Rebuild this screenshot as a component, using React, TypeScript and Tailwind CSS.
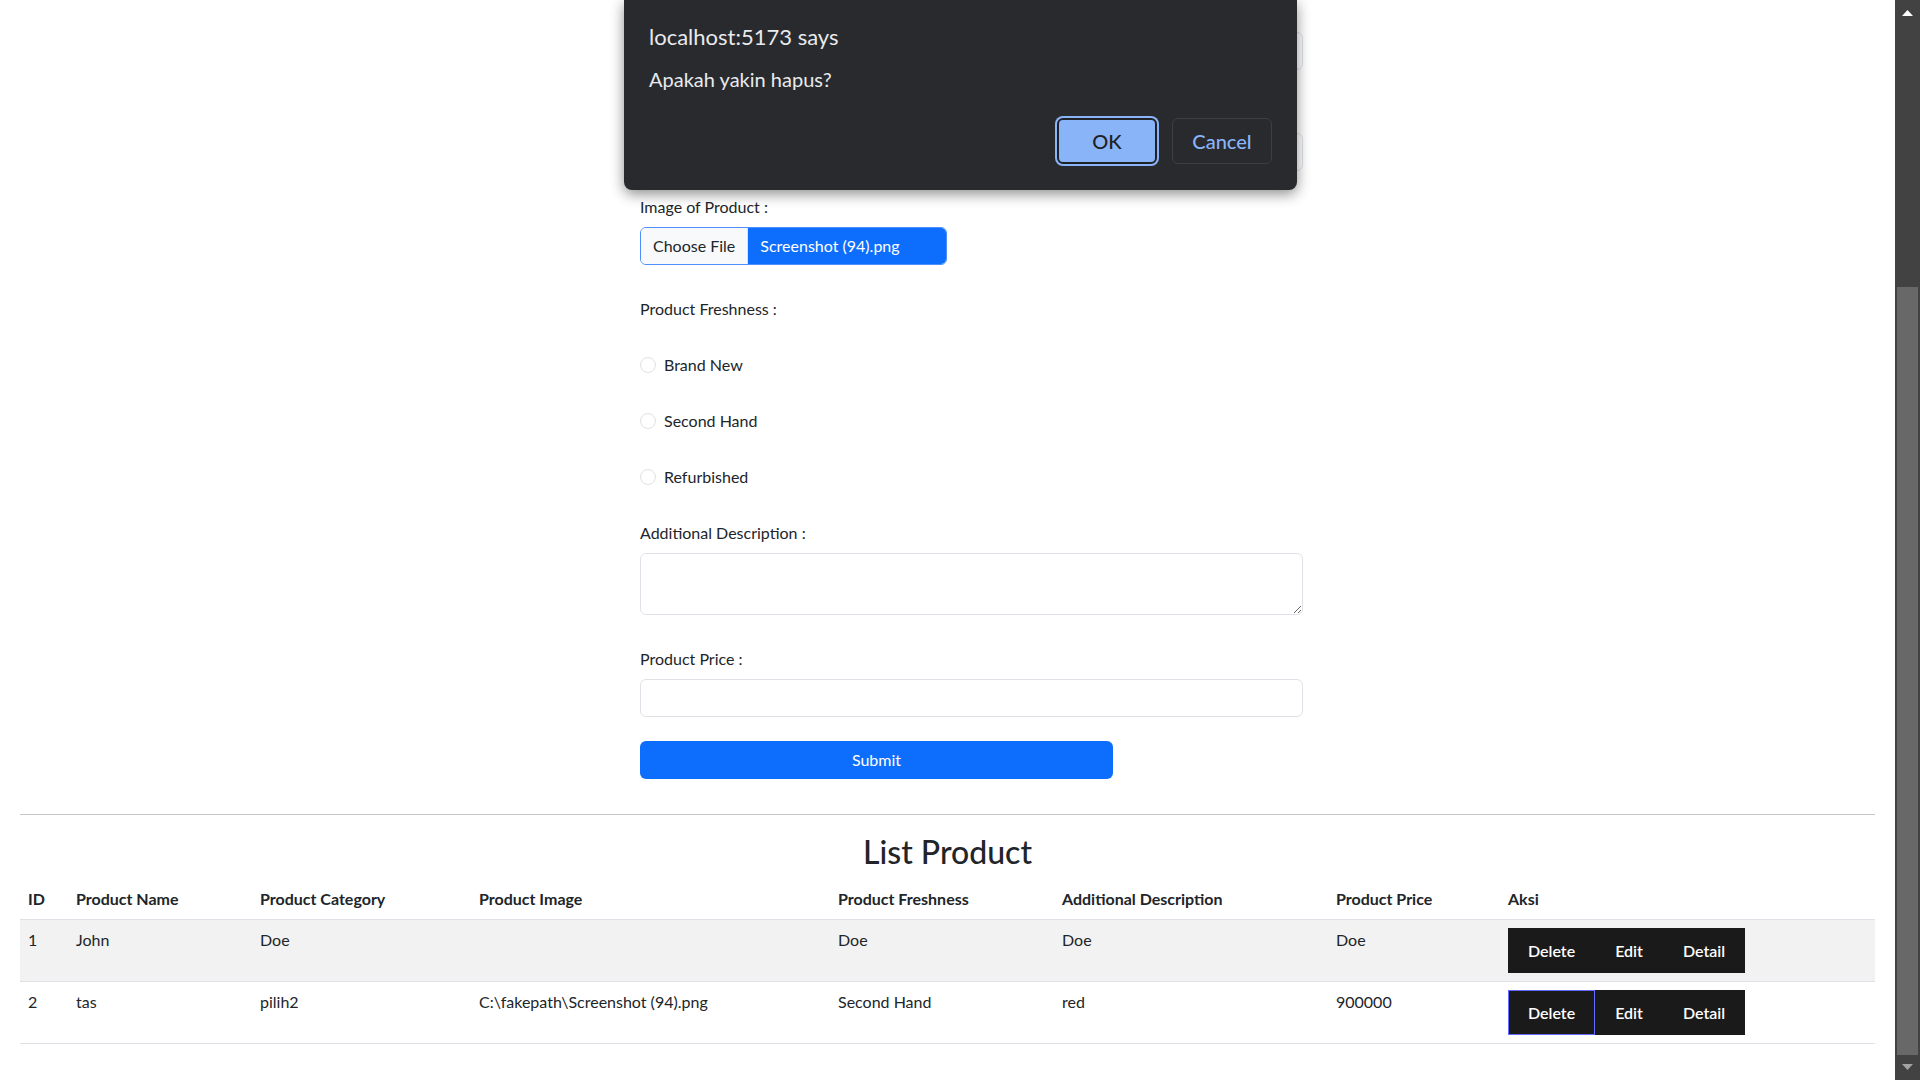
import type { ReactNode } from "react";

type Row = {
  id: number;
  name: string;
  category: string;
  image: string;
  freshness: string;
  desc: string;
  price: string;
};

const rows: Row[] = [
  { id: 1, name: "John", category: "Doe", image: "", freshness: "Doe", desc: "Doe", price: "Doe" },
  {
    id: 2,
    name: "tas",
    category: "pilih2",
    image: "C:\\fakepath\\Screenshot (94).png",
    freshness: "Second Hand",
    desc: "red",
    price: "900000",
  },
];

const columns = [
  { label: "ID", width: "w-[48px]" },
  { label: "Product Name", width: "w-[184px]" },
  { label: "Product Category", width: "w-[219px]" },
  { label: "Product Image", width: "w-[359px]" },
  { label: "Product Freshness", width: "w-[224px]" },
  { label: "Additional Description", width: "w-[274px]" },
  { label: "Product Price", width: "w-[172px]" },
  { label: "Aksi", width: "" },
];

function Label({ children, className = "" }: { children: ReactNode; className?: string }) {
  return <label className={`block h-6 leading-6 mb-2 ${className}`}>{children}</label>;
}

function TextInput({ className = "" }: { className?: string }) {
  return (
    <input
      type="text"
      className={`block w-full h-[38px] rounded-[6px] border border-[#dee2e6] bg-white px-3 outline-none ${className}`}
    />
  );
}

function Radio({ label }: { label: string }) {
  return (
    <div className="flex items-center h-6 mt-8">
      <input
        type="radio"
        name="freshness"
        className="appearance-none w-4 h-4 rounded-full border border-[#dee2e6] bg-white m-0"
      />
      <span className="ml-2">{label}</span>
    </div>
  );
}

function ActionButtons({ hovered }: { hovered?: boolean }) {
  const base = "h-[45px] px-[19px] bg-[#1a1a1a] text-white font-semibold border leading-6";
  return (
    <div className="flex">
      <button className={`${base} ${hovered ? "border-[#646cff]" : "border-transparent"}`}>Delete</button>
      <button className={`${base} border-transparent`}>Edit</button>
      <button className={`${base} border-transparent`}>Detail</button>
    </div>
  );
}

function ProductForm() {
  return (
    <div className="ml-[640px] w-[663px]">
      <Label>Product Category :</Label>
      <TextInput />
      <Label className="mt-[31px]">Product Name :</Label>
      <TextInput />
      <Label className="mt-6">Image of Product :</Label>
      <div className="flex h-[38px] w-[307px] rounded-[6px] border border-[#4d8efc] overflow-hidden">
        <span className="flex items-center px-3 bg-[#f8f9fa] border-r border-[#dee2e6] text-[#212529]">
          Choose File
        </span>
        <span className="flex flex-1 items-center pl-3 bg-[#0d6efd] text-white">Screenshot (94).png</span>
      </div>
      <Label className="mt-[32px] mb-0">Product Freshness :</Label>
      <Radio label="Brand New" />
      <Radio label="Second Hand" />
      <Radio label="Refurbished" />
      <Label className="mt-[32px]">Additional Description :</Label>
      <textarea
        rows={2}
        className="block w-full h-[62px] rounded-[6px] border border-[#dee2e6] bg-white px-3 py-1.5 outline-none"
      />
      <Label className="mt-8">Product Price :</Label>
      <TextInput />
      <button className="mt-6 block w-[473px] h-[38px] rounded-[6px] bg-[#0d6efd] text-white">Submit</button>
    </div>
  );
}

function ProductTable() {
  return (
    <table className="w-full table-fixed border-collapse text-left">
      <thead>
        <tr className="border-b border-[#dee2e6]">
          {columns.map((c) => (
            <th key={c.label} className={`${c.width} p-2 font-bold leading-6`}>
              {c.label}
            </th>
          ))}
        </tr>
      </thead>
      <tbody>
        {rows.map((r, i) => (
          <tr key={r.id} className={`border-b border-[#dee2e6] align-top ${i === 0 ? "bg-[#f2f2f2]" : "bg-white"}`}>
            <td className="p-2 leading-6">{r.id}</td>
            <td className="p-2 leading-6">{r.name}</td>
            <td className="p-2 leading-6">{r.category}</td>
            <td className="p-2 leading-6">{r.image}</td>
            <td className="p-2 leading-6">{r.freshness}</td>
            <td className="p-2 leading-6">{r.desc}</td>
            <td className="p-2 leading-6">{r.price}</td>
            <td className="p-2 leading-6">
              <ActionButtons hovered={i === 1} />
            </td>
          </tr>
        ))}
      </tbody>
    </table>
  );
}

function ConfirmDialog() {
  return (
    <div className="absolute left-[624px] top-0 w-[673px] h-[190px] rounded-b-[8px] bg-[#292a2d] shadow-[0_4px_14px_rgba(0,0,0,0.45)] px-[25px] pt-[22px] text-[#e8eaed]">
      <div className="text-[22px] leading-[29px]">localhost:5173 says</div>
      <div className="mt-[15px] text-[20px] leading-[27px]">Apakah yakin hapus?</div>
      <div className="mt-[25px] flex justify-end gap-[15px]">
        <button className="w-[100px] h-[46px] rounded-[6px] bg-[#8ab4f8] border-2 border-[#202124] ring-2 ring-[#8ab4f8] text-[#202124] text-[20px] font-medium">
          OK
        </button>
        <button className="w-[100px] h-[46px] rounded-[6px] border border-[#3c4043] text-[#8ab4f8] text-[20px] font-medium">
          Cancel
        </button>
      </div>
    </div>
  );
}

function Scrollbar() {
  return (
    <div className="w-[25px] h-full bg-[#424242] flex flex-col items-center">
      <div className="h-[26px] flex items-start pt-[10px]">
        <svg width="11" height="6" viewBox="0 0 11 6">
          <polygon points="5.5,0 11,6 0,6" fill="#ffffff" />
        </svg>
      </div>
      <div className="h-[261px]" />
      <div className="w-[21px] flex-1 bg-[#686868]" />
      <div className="h-[25px] flex items-start pt-[9px]">
        <svg width="11" height="6" viewBox="0 0 11 6">
          <polygon points="0,0 11,0 5.5,6" fill="#a3a3a3" />
        </svg>
      </div>
    </div>
  );
}

export default function App() {
  return (
    <div className="relative flex w-[1920px] h-[1080px] overflow-hidden bg-white text-[#212529] text-base [font-family:'Segoe_UI',Lato,sans-serif]">
      <main className="flex-1 min-w-0">
        <ProductForm />
        <div className="mx-[20px]">
          <hr className="mt-[35px] border-0 border-t border-[#c6c6c6]" />
          <h2 className="mt-[18px] mb-2 text-center text-[32px] leading-[38px] font-medium">List Product</h2>
          <ProductTable />
        </div>
      </main>
      <Scrollbar />
      <ConfirmDialog />
    </div>
  );
}
